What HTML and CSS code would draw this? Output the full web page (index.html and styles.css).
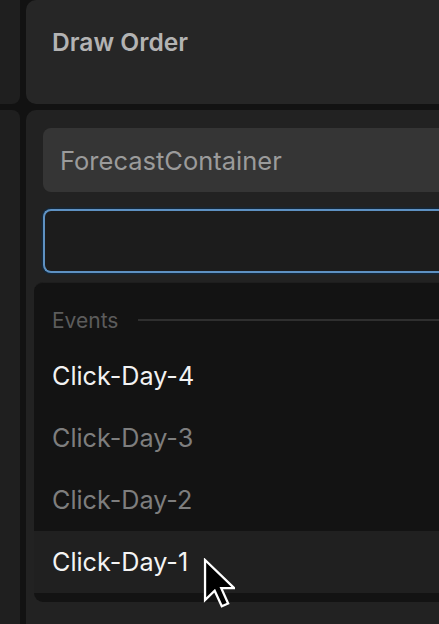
FILE: index.html
```html
<!DOCTYPE html>
<html>
<head>
<meta charset="utf-8">
<link rel="stylesheet" href="styles.css">
</head>
<body>
<div class="app">
  <div class="side side-top"></div>
  <div class="panel panel-top"><h1 class="title">Draw Order</h1></div>
  <div class="side side-bottom"></div>
  <div class="panel panel-main">
    <div class="field">ForecastContainer</div>
    <div class="search"></div>
    <div class="menu">
      <div class="menu-header"><span class="menu-label">Events</span><span class="menu-rule"></span></div>
      <div class="menu-item active">Click-Day-4</div>
      <div class="menu-item muted">Click-Day-3</div>
      <div class="menu-item muted">Click-Day-2</div>
      <div class="menu-item hover">Click-Day-1</div>
    </div>
  </div>
</div>
<svg class="pointer" width="32" height="50" viewBox="0 0 12.6 19.7" xmlns="http://www.w3.org/2000/svg">
  <path d="M0.8 0.8 V16.6 L4.6 12.9 L7.4 19 L9.9 17.9 L7.2 11.9 H12.3 Z" fill="#000" stroke="#fff" stroke-width="0.9" stroke-linejoin="miter"/>
</svg>
</body>
</html>
```
FILE: styles.css
```css
html, body {
  margin: 0;
  padding: 0;
  background: #121212;
  overflow: hidden;
  width: 439px;
  height: 624px;
}
body {
  position: relative;
  font-family: Inter, "Noto Sans", sans-serif;
}
.app {
  width: 439px;
  height: 624px;
  overflow: hidden;
  display: grid;
  grid-template-columns: 20px 1fr;
  grid-template-rows: 104px 1fr;
  column-gap: 6px;
  row-gap: 6px;
}
.side {
  background: #1f1f1f;
}
.side-top {
  border-radius: 0 0 8px 0;
}
.side-bottom {
  border-radius: 0 8px 0 0;
}
.panel {
  background: #262626;
  border-radius: 10px 0 0 10px;
  min-width: 0;
}
.panel-top {
  padding: 27px 0 0 26px;
  box-sizing: border-box;
}
.title {
  margin: 0;
  font-size: 24.6px;
  line-height: 30px;
  font-weight: 600;
  color: #b3b3b3;
  white-space: nowrap;
}
.panel-main {
  position: relative;
  overflow: hidden;
  background: #222222;
  border-radius: 10px 0 0 0;
  padding: 18px 0 0 17px;
  box-sizing: border-box;
  display: flex;
  flex-direction: column;
  gap: 17px;
}
.field {
  height: 64px;
  flex: none;
  box-sizing: border-box;
  background: #353535;
  border-radius: 8px 0 0 8px;
  padding-left: 17px;
  display: flex;
  align-items: center;
  font-size: 25.5px;
  color: #9b9b9b;
  white-space: nowrap;
}
.search {
  height: 64px;
  flex: none;
  box-sizing: border-box;
  background: #1c1c1c;
  border: 2px solid #5e91c2;
  border-right: none;
  border-radius: 8px 0 0 8px;
  box-shadow: 0 0 0 1.5px #14283b;
}
.menu {
  position: absolute;
  left: 8px;
  right: 0;
  top: 172px;
  height: 320px;
  box-sizing: border-box;
  background: #131313;
  border-top: 1px solid #1e1e1e;
  border-radius: 9px 0 0 9px;
  padding-bottom: 9px;
  display: flex;
  flex-direction: column;
}
.menu-header {
  height: 62px;
  flex: none;
  display: flex;
  align-items: center;
  gap: 20px;
  padding: 12px 0 0 18px;
  box-sizing: border-box;
}
.menu-label {
  font-size: 21px;
  color: #5c5c5c;
}
.menu-rule {
  flex: 1;
  height: 2px;
  background: #2f2f2f;
}
.menu-item {
  height: 62px;
  flex: none;
  display: flex;
  align-items: center;
  padding-left: 18px;
  font-size: 25.2px;
  color: #7e7e7e;
  white-space: nowrap;
}
.menu-item.active {
  color: #f2f2f2;
}
.menu-item.hover {
  background: #202020;
  color: #f4f4f4;
}
.pointer {
  position: absolute;
  left: 203px;
  top: 558px;
}
```
